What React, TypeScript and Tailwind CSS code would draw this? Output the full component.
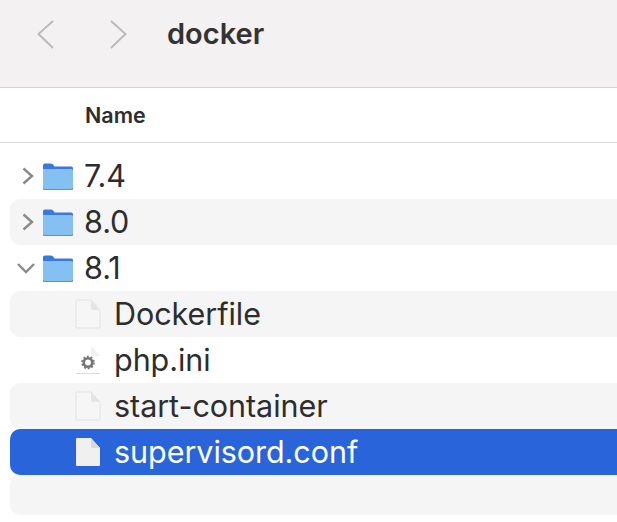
import { ReactNode } from 'react';

function Chevron({ open }: { open?: boolean }) {
  return (
    <svg width="16" height="16" viewBox="0 0 16 16" fill="none" className="shrink-0 overflow-visible">
      <path
        d={open ? 'M-2 4 L6 12 L14 4' : 'M3.5 0.5 L12 8 L3.5 15.5'}
        stroke="#8a8a8a"
        strokeWidth="2.4"
      />
    </svg>
  );
}

function FolderIcon() {
  return (
    <svg width="30" height="28" viewBox="0 0 30 28" className="shrink-0">
      <path d="M0 3 Q0 1.5 2 1.5 H8 Q9.5 1.5 10.5 3 L11.5 4.5 H28 Q30 4.5 30 6 V10 H0 Z" fill="#3a78e0" />
      <path d="M0 7 H28 Q30 7 30 8 V25 Q30 27 28 27 H2 Q0 27 0 25 Z" fill="#84c0f2" />
      <path d="M0 25.5 Q0 27.5 2 27.5 H28 Q30 27.5 30 25.5" fill="none" stroke="#7d8b98" strokeWidth="1.2" />
    </svg>
  );
}

function FileIcon({ selected, gear }: { selected?: boolean; gear?: boolean }) {
  if (gear) {
    return (
      <svg width="26" height="30" viewBox="0 0 26 30" className="shrink-0">
        <path d="M1 1 H16 L25 11 V28 H1 Z" fill="#ffffff" />
        <path d="M16 1 L25 11 H18 Q16 11 16 9 Z" fill="#f0f0f0" />
        <path d="M1 28.5 H25" stroke="#dcdcdc" strokeWidth="1" />
        <circle cx="13" cy="17.5" r="4.2" fill="none" stroke="#757575" strokeWidth="2.6" />
        <circle cx="13" cy="17.5" r="6" fill="none" stroke="#757575" strokeWidth="1.6" strokeDasharray="2 1.77" />
      </svg>
    );
  }
  return (
    <svg width="26" height="30" viewBox="0 0 26 30" className="shrink-0">
      <path
        d="M1 2 Q1 1 2 1 H16 L25 11 V28 Q25 29 24 29 H2 Q1 29 1 28 Z"
        fill={selected ? '#f1f0f1' : '#f7f6f7'}
        stroke={selected ? 'none' : '#dfdedf'}
        strokeWidth="0.8"
      />
      <path d="M16 1 V9 Q16 11 18 11 H25 Z" fill={selected ? '#d9d8da' : '#e6e5e6'} />
    </svg>
  );
}

interface RowProps {
  label?: string;
  striped?: boolean;
  selected?: boolean;
  indent?: boolean;
  chevron?: ReactNode;
  icon?: ReactNode;
}

function Row({ label, striped, selected, indent, chevron, icon }: RowProps) {
  const bg = selected ? 'bg-[#2a64da] text-white' : striped ? 'bg-[#f5f5f5] text-[#2d2d2d]' : 'text-[#2d2d2d]';
  return (
    <div className={`h-[46px] ml-[10px] flex items-center rounded-l-[10px] ${bg}`}>
      {indent ? (
        <div className="w-[104px] pl-[65px] shrink-0 flex justify-start">{icon}</div>
      ) : (
        <div className="w-[74px] shrink-0 flex items-center">
          <div className="w-[33px] pl-[10px] flex justify-start">{chevron}</div>
          {icon}
        </div>
      )}
      {label && <span className="text-[30.5px] leading-none tracking-[-0.05px] whitespace-nowrap">{label}</span>}
    </div>
  );
}

export default function App() {
  return (
    <div className="w-[617px] h-[522px] overflow-hidden bg-white font-['Inter','Liberation_Sans',sans-serif]">
      <div className="h-[88px] bg-[#f3f1f2] border-b border-[#d4d3d3] flex items-start pt-[18px]">
        <div className="w-[167px] shrink-0 flex items-center pl-[37px] gap-[55px] h-[32px]">
          <svg width="18" height="30" viewBox="0 0 18 30" fill="none" className="shrink-0">
            <path d="M16 2 L1.5 15 L16 29" stroke="#bcbbbb" strokeWidth="2" />
          </svg>
          <svg width="18" height="30" viewBox="0 0 18 30" fill="none" className="shrink-0">
            <path d="M1 2 L15.5 15 L1 29" stroke="#bcbbbb" strokeWidth="2" />
          </svg>
        </div>
        <span className="text-[29px] leading-[32px] font-semibold text-[#333333]">docker</span>
      </div>
      <div className="h-[55px] border-b border-[#d9d8d8] flex items-center pl-[85px]">
        <span className="text-[21.5px] font-semibold text-[#2d2d2d]">Name</span>
      </div>
      <div className="pt-[10px]">
        <Row label="7.4" chevron={<Chevron />} icon={<FolderIcon />} />
        <Row label="8.0" striped chevron={<Chevron />} icon={<FolderIcon />} />
        <Row label="8.1" chevron={<Chevron open />} icon={<FolderIcon />} />
        <Row label="Dockerfile" striped indent icon={<FileIcon />} />
        <Row label="php.ini" indent icon={<FileIcon gear />} />
        <Row label="start-container" striped indent icon={<FileIcon />} />
        <Row label="supervisord.conf" selected indent icon={<FileIcon selected />} />
        <div className="h-[40px] ml-[10px] rounded-l-[10px] bg-[#f5f5f5]" />
      </div>
    </div>
  );
}
